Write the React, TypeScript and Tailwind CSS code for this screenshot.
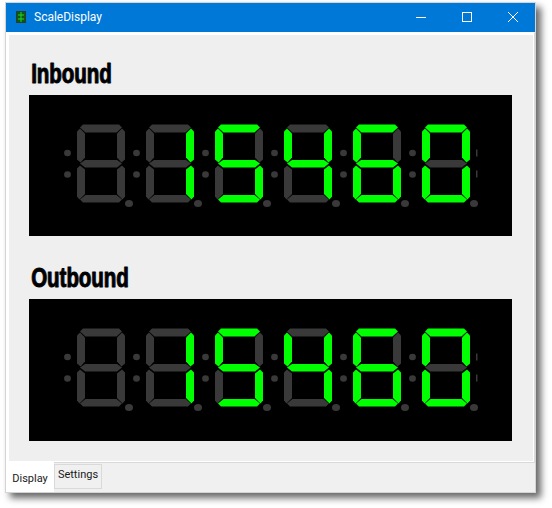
import React from 'react';

// --- seven segment polygons, digit box is 48 x 78 ---
const SEGMENTS: Record<string, string> = {
  top: '3,3 6,0 42,0 45,3 39.5,8 8.5,8',
  upperLeft: '0,7 3,4 8,9 8,33 3.5,38 0,35',
  upperRight: '48,7 45,4 40,9 40,33 44.5,38 48,35',
  middle: '3,39 8,35.5 40,35.5 45,39 40,43 8,43',
  lowerLeft: '0,44 3,41 8,45 8,69.5 2.5,75 0,72',
  lowerRight: '48,44 45,41 40,45 40,69.5 45.5,75 48,72',
  bottom: '3,75 8.5,70.5 39.5,70.5 45,75 42,78 6,78',
};

const LIT: Record<string, string[]> = {
  ' ': [],
  '0': ['top', 'upperLeft', 'upperRight', 'lowerLeft', 'lowerRight', 'bottom'],
  '1': ['upperRight', 'lowerRight'],
  '4': ['upperLeft', 'upperRight', 'middle', 'lowerRight'],
  '5': ['top', 'upperLeft', 'middle', 'lowerRight', 'bottom'],
  '6': ['top', 'upperLeft', 'middle', 'lowerLeft', 'lowerRight', 'bottom'],
};

const OFF = '#393939';
const ON = '#00ff00';

const Digit: React.FC<{ value: string; x: number }> = ({ value, x }) => (
  <g transform={`translate(${x} 0)`}>
    {Object.entries(SEGMENTS).map(([name, points]) => (
      <polygon key={name} points={points} fill={LIT[value].includes(name) ? ON : OFF} />
    ))}
    <ellipse cx={-9.5} cy={28.5} rx={3.4} ry={3.2} fill={OFF} />
    <ellipse cx={-9.5} cy={50} rx={3.4} ry={3.2} fill={OFF} />
    <ellipse cx={52} cy={79} rx={4} ry={3.6} fill={OFF} />
  </g>
);

const LcdDisplay: React.FC<{ value: string; height: string }> = ({ value, height }) => (
  <div className={`flex items-center bg-black ${height}`}>
    <svg width={483} height={88} viewBox="0 0 483 88" className="block">
      <g transform="translate(48 2.5)">
        {value.split('').map((ch, i) => (
          <Digit key={i} value={ch} x={i * 69} />
        ))}
        <rect x={399} y={25} width={1.5} height={7} fill={OFF} />
        <rect x={399} y={46} width={1.5} height={7} fill={OFF} />
      </g>
    </svg>
  </div>
);

const Heading: React.FC<{ children: React.ReactNode }> = ({ children }) => (
  <h2 className="h-[36px] origin-left scale-x-[.73] pl-[3px] font-['Liberation_Sans',sans-serif] text-[28px] leading-[30px] font-bold whitespace-nowrap text-black [-webkit-text-stroke:0.9px_black] [text-shadow:1px_0_0_rgba(40,130,220,.55),-1px_0_0_rgba(220,130,40,.35)]">
    {children}
  </h2>
);

export default function App() {
  return (
    <div className="h-[508px] w-[552px] overflow-hidden bg-white pt-[2px] pl-[5px]">
      <div className="flex h-[491px] w-[531px] flex-col bg-[#f0f0f0] shadow-[5px_5px_7px_rgba(0,0,0,0.6)] outline outline-1 -outline-offset-1 outline-[#d4d4d4]">
        {/* title bar */}
        <div className="flex h-[30px] shrink-0 items-center bg-[#0078d7] pl-[11px] text-white">
          <svg width={10} height={12} viewBox="0 0 10 12" className="mr-[8px]">
            <rect width={10} height={12} fill="#2f3a2f" />
            <rect x={1} y={1} width={8} height={10} fill="#0a5a12" />
            <path d="M5 1v10M2 4h6M2 8h6" stroke="#22d62a" strokeWidth={1} />
          </svg>
          <span className="font-['Roboto',sans-serif] text-[12px]">ScaleDisplay</span>
          <div className="ml-auto flex">
            <button className="flex h-[30px] w-[46px] items-center justify-center">
              <svg width={10} height={10} viewBox="0 0 10 10"><path d="M0 5.5h10" stroke="white" /></svg>
            </button>
            <button className="flex h-[30px] w-[46px] items-center justify-center">
              <svg width={10} height={10} viewBox="0 0 10 10"><rect x={0.5} y={0.5} width={9} height={9} fill="none" stroke="white" /></svg>
            </button>
            <button className="flex h-[30px] w-[46px] items-center justify-center">
              <svg width={10} height={10} viewBox="0 0 10 10"><path d="M0 0L10 10M10 0L0 10" stroke="white" /></svg>
            </button>
          </div>
        </div>

        {/* tab pane */}
        <div className="mr-[2px] ml-[1px] flex h-[430px] shrink-0 flex-col border-t-[3px] border-r border-b border-l-[3px] border-white bg-[#efefef] pt-[24px] pr-[21px] pl-[20px] shadow-[1px_1px_0_#d9d9d9]">
          <Heading>Inbound</Heading>
          <LcdDisplay value=" 15460" height="h-[141px]" />
          <div className="h-[27px]" />
          <Heading>Outbound</Heading>
          <LcdDisplay value=" 15460" height="h-[142px]" />
        </div>

        {/* tabs */}
        <div className="ml-[1px] flex items-start font-['Roboto',sans-serif] text-[11px] text-[#1a1a1a]">
          <div className="flex h-[30px] w-[48px] items-center justify-center bg-white pt-[4px]">Display</div>
          <div className="mt-[2px] flex h-[25px] w-[48px] items-center justify-center border border-[#d9d9d9] bg-[#f0f0f0] pb-[2px]">Settings</div>
        </div>
      </div>
    </div>
  );
}
